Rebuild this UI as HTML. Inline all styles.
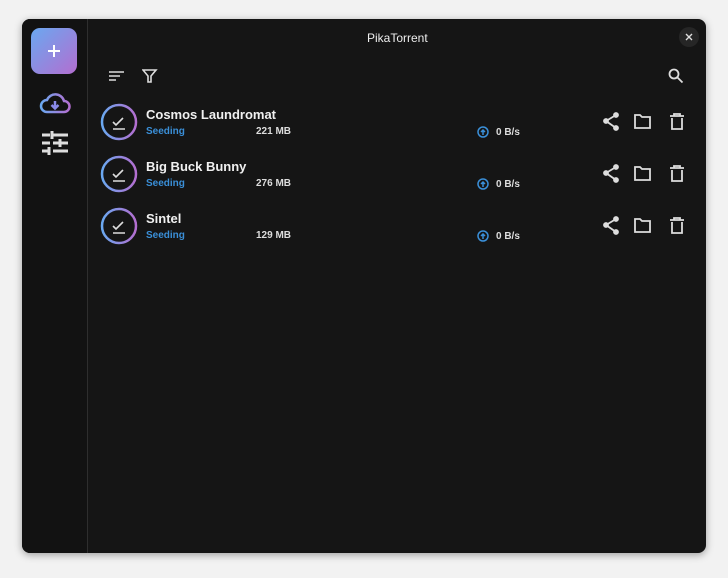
<!DOCTYPE html><html><head><style>
body{margin:0;width:728px;height:578px;background:#f2f2f2;font-family:"Liberation Sans",sans-serif;overflow:hidden}
.win{position:absolute;left:22px;top:19px;width:684px;height:534px;background:#151515;border-radius:8px;overflow:hidden;box-shadow:0 2px 8px rgba(0,0,0,.35)}
.side{position:absolute;left:0;top:0;width:65px;height:534px;background:#121212;border-right:1px solid #2e2e2e}
.add{position:absolute;left:9px;top:9px;width:46px;height:46px;border-radius:9px;background:linear-gradient(135deg,#6aa8f0,#b36ed0)}
.t{position:absolute;color:#fff}
.row{position:absolute;left:78px;width:600px;height:50px}
.name{position:absolute;left:46px;top:4px;font-size:13px;font-weight:bold;color:#f0f0f0}
.seed{position:absolute;left:46px;top:23px;font-size:10px;font-weight:bold;color:#3a8fd8}
.size{position:absolute;left:156px;top:23px;font-size:10px;font-weight:bold;color:#ddd}
.spd{position:absolute;left:396px;top:24px;font-size:10px;font-weight:bold;color:#ddd}
</style></head><body>
<div class="win">
<div class="side">
<div class="add"><svg width="46" height="46"><path d="M23 17v12M17 23h12" stroke="#fff" stroke-width="2"/></svg></div>
<svg style="position:absolute;left:17px;top:73px" width="32" height="24"><defs><linearGradient id="g" x1="0" x2="1"><stop offset="0" stop-color="#6aa8f0"/><stop offset="1" stop-color="#b36ed0"/></linearGradient></defs><path d="M8 20a6 6 0 0 1 0-12a9 9 0 0 1 17 1a5.5 5.5 0 0 1 0 11z" fill="none" stroke="url(#g)" stroke-width="2.5"/><path d="M16 9v7M12.5 13l3.5 3.5 3.5-3.5" stroke="#8a8ae8" stroke-width="2.5" fill="none"/></svg>
<svg style="position:absolute;left:20px;top:112px" width="26" height="24" stroke="#ddd" stroke-width="3"><path d="M0 4h26M0 12h26M0 20h26" stroke-dasharray="8 3 15"/><path d="M10 0v8M18 8v8M7 16v8"/></svg>
</div>
<div class="t" style="left:345px;top:12px;font-size:12px;color:#eee">PikaTorrent</div>
<div style="position:absolute;left:657px;top:8px;width:20px;height:20px;border-radius:50%;background:#262626"><svg width="20" height="20"><path d="M7 7l6 6M13 7l-6 6" stroke="#ddd" stroke-width="1.4"/></svg></div>
<svg style="position:absolute;left:87px;top:51px" width="16" height="12" stroke="#ddd" stroke-width="1.6"><path d="M0 2h15M0 6h11M0 10h7"/></svg>
<svg style="position:absolute;left:120px;top:50px" width="16" height="14" stroke="#ddd" stroke-width="1.6" fill="none"><path d="M1 1h13L9 7v6H6V7z"/></svg>
<svg style="position:absolute;left:646px;top:49px" width="16" height="16" stroke="#ddd" stroke-width="1.8" fill="none"><circle cx="6" cy="6" r="4.5"/><path d="M9.5 9.5l5 5"/></svg>
<div class="row" style="top:84px">
<svg style="position:absolute;left:0;top:0" width="38" height="38"><defs><linearGradient id="r" x1="0" x2="1"><stop offset="0" stop-color="#6aa8f0"/><stop offset="1" stop-color="#b36ed0"/></linearGradient></defs><circle cx="19" cy="19" r="17" fill="none" stroke="url(#r)" stroke-width="2.5"/><path d="M13 19l3 3 7-7M13 26h12" stroke="#ddd" stroke-width="1.6" fill="none"/></svg>
<div class="name">Cosmos Laundromat</div><div class="seed">Seeding</div><div class="size">221 MB</div>
<svg style="position:absolute;left:377px;top:23px" width="12" height="12" stroke="#3a8fd8" stroke-width="1.5" fill="none"><circle cx="6" cy="6" r="5"/><path d="M6 9V4M4 6l2-2 2 2"/></svg><div class="spd">0 B/s</div>
<svg style="position:absolute;left:502px;top:9px" width="90" height="20" stroke="#ddd" stroke-width="1.8" fill="none"><circle cx="14" cy="3" r="2" fill="#ddd"/><circle cx="4" cy="9" r="2" fill="#ddd"/><circle cx="14" cy="16" r="2" fill="#ddd"/><path d="M14 3L4 9l10 7"/><path d="M33 3h5l2 2h8v11H33z"/><path d="M68 4h14M72 4V2h6v2M70 6v11h10V6"/></svg>
</div>
<div class="row" style="top:136px">
<svg style="position:absolute;left:0;top:0" width="38" height="38"><circle cx="19" cy="19" r="17" fill="none" stroke="url(#r)" stroke-width="2.5"/><path d="M13 19l3 3 7-7M13 26h12" stroke="#ddd" stroke-width="1.6" fill="none"/></svg>
<div class="name">Big Buck Bunny</div><div class="seed">Seeding</div><div class="size">276 MB</div>
<svg style="position:absolute;left:377px;top:23px" width="12" height="12" stroke="#3a8fd8" stroke-width="1.5" fill="none"><circle cx="6" cy="6" r="5"/><path d="M6 9V4M4 6l2-2 2 2"/></svg><div class="spd">0 B/s</div>
<svg style="position:absolute;left:502px;top:9px" width="90" height="20" stroke="#ddd" stroke-width="1.8" fill="none"><circle cx="14" cy="3" r="2" fill="#ddd"/><circle cx="4" cy="9" r="2" fill="#ddd"/><circle cx="14" cy="16" r="2" fill="#ddd"/><path d="M14 3L4 9l10 7"/><path d="M33 3h5l2 2h8v11H33z"/><path d="M68 4h14M72 4V2h6v2M70 6v11h10V6"/></svg>
</div>
<div class="row" style="top:188px">
<svg style="position:absolute;left:0;top:0" width="38" height="38"><circle cx="19" cy="19" r="17" fill="none" stroke="url(#r)" stroke-width="2.5"/><path d="M13 19l3 3 7-7M13 26h12" stroke="#ddd" stroke-width="1.6" fill="none"/></svg>
<div class="name">Sintel</div><div class="seed">Seeding</div><div class="size">129 MB</div>
<svg style="position:absolute;left:377px;top:23px" width="12" height="12" stroke="#3a8fd8" stroke-width="1.5" fill="none"><circle cx="6" cy="6" r="5"/><path d="M6 9V4M4 6l2-2 2 2"/></svg><div class="spd">0 B/s</div>
<svg style="position:absolute;left:502px;top:9px" width="90" height="20" stroke="#ddd" stroke-width="1.8" fill="none"><circle cx="14" cy="3" r="2" fill="#ddd"/><circle cx="4" cy="9" r="2" fill="#ddd"/><circle cx="14" cy="16" r="2" fill="#ddd"/><path d="M14 3L4 9l10 7"/><path d="M33 3h5l2 2h8v11H33z"/><path d="M68 4h14M72 4V2h6v2M70 6v11h10V6"/></svg>
</div>
</div>
</body></html>
